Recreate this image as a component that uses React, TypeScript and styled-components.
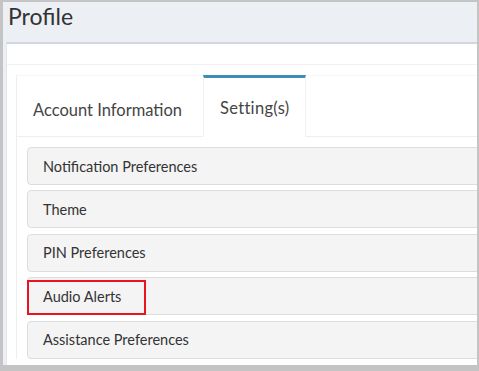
import React from "react";
import styled, { createGlobalStyle } from "styled-components";

const Global = createGlobalStyle`
  html, body { margin: 0; padding: 0; background: #fff; }
  body { font-family: Lato, "Noto Sans", sans-serif; }
  * { box-sizing: border-box; }
`;

const Frame = styled.div`
  width: 479px;
  height: 371px;
  border-style: solid;
  border-color: #c4c4c4;
  border-width: 2px 2px 6px 3px;
  background: #ecf0f5;
  overflow: hidden;
  display: flex;
  flex-direction: column;
`;

const PageHeader = styled.div`
  height: 40px;
  flex: none;
  padding-left: 5px;
  display: flex;
  align-items: center;
`;

const Title = styled.h1`
  margin: 0;
  font-weight: 400;
  font-size: 23px;
  color: #333;
  line-height: 1;
  margin-top: -12px;
`;

const Card = styled.div`
  margin-left: 3px;
  flex: 1;
  background: #fff;
  border-top: 2px solid #d2d6de;
  border-left: 1px solid #e3e6ea;
  width: 520px;
  display: flex;
  flex-direction: column;
`;

const CardHeader = styled.div`
  height: 21px;
  border-bottom: 1px solid #f2f2f2;
  flex: none;
`;

const CardBody = styled.div`
  padding: 10px 0 0 9px;
  flex: 1;
`;

const TabsBox = styled.div`
  border-left: 1px solid #eeeeee;
  border-top: 1px solid #f6f6f6;
`;

const TabNav = styled.div`
  display: flex;
  height: 61px;
  border-bottom: 1px solid #eeeeee;
`;

const Tab = styled.div<{ $active?: boolean }>`
  display: flex;
  align-items: center;
  padding: ${(p) => (p.$active ? "2px 16px 0" : "4px 20px 0 15px")};
  min-width: ${(p) => (p.$active ? "102px" : "0")};
  font-size: 16.5px;
  letter-spacing: ${(p) => (p.$active ? "0.3px" : "0")};
  color: #444;
  margin-bottom: -1px;
  margin-top: ${(p) => (p.$active ? "-1px" : "0")};
  background: #fff;
  border-top: 3px solid ${(p) => (p.$active ? "#3c8dbc" : "transparent")};
  border-left: 1px solid ${(p) => (p.$active ? "#f0f0f0" : "transparent")};
  border-right: 1px solid ${(p) => (p.$active ? "#f0f0f0" : "transparent")};
  border-bottom: 1px solid ${(p) => (p.$active ? "#fff" : "#eeeeee")};
`;

const TabContent = styled.div`
  padding: 10px 0 0 10px;
  display: flex;
  flex-direction: column;
  gap: 5.4px;
`;

const Item = styled.div`
  position: relative;
  height: 38px;
  border: 1px solid #dddddd;
  border-radius: 4px;
  background: #f4f4f4;
  display: flex;
  align-items: center;
  padding-left: 15px;
  font-size: 14.5px;
  color: #333;
`;

const Highlight = styled.div`
  position: absolute;
  left: -1px;
  top: 2px;
  width: 119px;
  height: 35px;
  border: 2px solid #e8141e;
`;

const items = [
  "Notification Preferences",
  "Theme",
  "PIN Preferences",
  "Audio Alerts",
  "Assistance Preferences",
];

export default function App() {
  return (
    <>
      <Global />
      <Frame>
        <PageHeader>
          <Title>Profile</Title>
        </PageHeader>
        <Card>
          <CardHeader />
          <CardBody>
            <TabsBox>
              <TabNav>
                <Tab>Account Information</Tab>
                <Tab $active>Setting(s)</Tab>
              </TabNav>
              <TabContent>
                {items.map((t) => (
                  <Item key={t}>
                    {t}
                    {t === "Audio Alerts" && <Highlight />}
                  </Item>
                ))}
              </TabContent>
            </TabsBox>
          </CardBody>
        </Card>
      </Frame>
    </>
  );
}
